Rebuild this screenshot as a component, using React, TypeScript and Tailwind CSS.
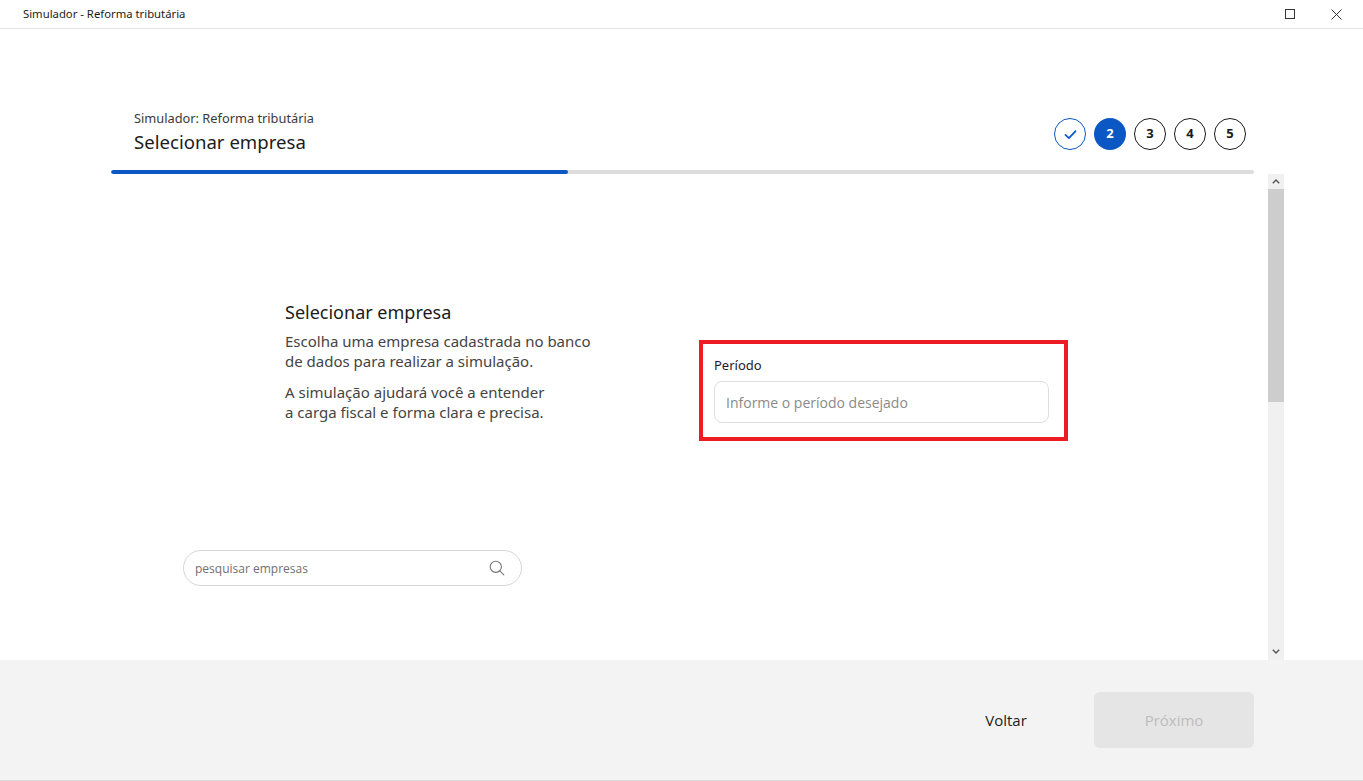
import React, { useState } from 'react';

const font = { fontFamily: '"Noto Sans", "Open Sans", sans-serif' };

const steps = [1, 2, 3, 4, 5];
const current = 2;

const StepDot: React.FC<{ n: number }> = ({ n }) => {
  if (n < current) {
    return (
      <div className="w-[32px] h-[32px] rounded-full border-[1.5px] border-[#0b57c4] bg-white flex items-center justify-center">
        <svg width="15" height="15" viewBox="0 0 14 14" fill="none">
          <path d="M2.3 7.4 L5.5 10.4 L11.7 3.8" stroke="#0b57c4" strokeWidth="1.6" strokeLinecap="round" strokeLinejoin="round" />
        </svg>
      </div>
    );
  }
  if (n === current) {
    return (
      <div className="w-[32px] h-[32px] rounded-full bg-[#0b57c4] flex items-center justify-center text-white text-[13px] font-bold">
        {n}
      </div>
    );
  }
  return (
    <div className="w-[32px] h-[32px] rounded-full border-[1.5px] border-[#1a1a1a] bg-white flex items-center justify-center text-[#1a1a1a] text-[13px] font-bold">
      {n}
    </div>
  );
};

export default function App() {
  const [periodo, setPeriodo] = useState('');
  const [busca, setBusca] = useState('');

  return (
    <div className="w-[1363px] h-[781px] bg-white flex flex-col overflow-hidden" style={font}>
      {/* Title bar */}
      <div className="h-[29px] flex items-center border-b border-[#e3e3e3] shrink-0">
        <span className="ml-[23px] text-[11.3px] text-[#1b1b1b]">Simulador - Reforma tributária</span>
        <div className="ml-auto flex items-center">
          <div className="w-[46px] h-[28px] flex items-center justify-center">
            <div className="w-[10px] h-[10px] border border-[#333]" />
          </div>
          <div className="w-[46px] h-[28px] flex items-center justify-center mr-[4px]">
            <svg width="11" height="11" viewBox="0 0 11 11">
              <path d="M0.5 0.5 L10.5 10.5 M10.5 0.5 L0.5 10.5" stroke="#333" strokeWidth="1" />
            </svg>
          </div>
        </div>
      </div>

      {/* Main */}
      <div className="flex-1 flex flex-col min-h-0">
        {/* Header */}
        <div className="ml-[111px] w-[1143px] pt-[80px] shrink-0">
          <div className="flex justify-between items-start pl-[23px] pr-[8px]">
            <div>
              <div className="text-[12.8px] leading-[18px] text-[#3a3a3a]">Simulador: Reforma tributária</div>
              <div className="text-[18.6px] leading-[30px] text-[#1b1b1b]">Selecionar empresa</div>
            </div>
            <div className="flex gap-[8px] mt-[9px]">
              {steps.map(n => (
                <StepDot key={n} n={n} />
              ))}
            </div>
          </div>
          <div className="mt-[13px] h-[4px] rounded-full bg-[#dcdcdc] overflow-hidden">
            <div className="h-full w-[457px] bg-[#0b57c4] rounded-full" />
          </div>
        </div>

        {/* Scroll area */}
        <div className="flex-1 flex min-h-0">
          <div className="flex-1">
            <div className="flex items-start pt-[126px]">
              <div className="ml-[285px] w-[330px]">
                <h2 className="text-[18px] leading-[24px] text-[#1b1b1b]">Selecionar empresa</h2>
                <p className="mt-[7px] text-[15px] leading-[20px] text-[#444]">
                  Escolha uma empresa cadastrada no banco<br />de dados para realizar a simulação.
                </p>
                <p className="mt-[11px] text-[15px] leading-[20px] text-[#444]">
                  A simulação ajudará você a entender<br />a carga fiscal e forma clara e precisa.
                </p>
              </div>
              <div className="ml-[84px] mt-[40px] w-[369px] h-[101px] border-[4px] border-[#ed1c24] pl-[11px] pr-[15px] pt-[13px]">
                <label className="block text-[13px] leading-[17px] text-[#1b1b1b]">Período</label>
                <input
                  className="mt-[7px] w-[335px] h-[42px] rounded-[8px] border border-[#dedede] px-[11px] text-[14px] text-[#333] placeholder:text-[#8a8a8a] outline-none"
                  style={{ fontFamily: '"Open Sans", sans-serif' }}
                  placeholder="Informe o período desejado"
                  value={periodo}
                  onChange={e => setPeriodo(e.target.value)}
                />
              </div>
            </div>
            <div className="ml-[183px] mt-[109px] w-[339px] h-[36px] rounded-full border border-[#d6d6d6] flex items-center pl-[11px] pr-[16px]">
              <input
                className="flex-1 text-[12px] leading-[16px] pt-[2px] text-[#333] placeholder:text-[#707070] outline-none bg-transparent"
                style={{ fontFamily: '"Open Sans", sans-serif' }}
                placeholder="pesquisar empresas"
                value={busca}
                onChange={e => setBusca(e.target.value)}
              />
              <svg width="16" height="16" viewBox="0 0 16 16" fill="none">
                <circle cx="6.8" cy="6.8" r="5.6" stroke="#777" strokeWidth="1.1" />
                <path d="M10.8 10.8 L14.8 14.8" stroke="#777" strokeWidth="1.1" strokeLinecap="round" />
              </svg>
            </div>
          </div>

          {/* Scrollbar */}
          <div className="w-[16px] mr-[79px] bg-[#f0f0f0] flex flex-col">
            <div className="h-[15px] flex items-center justify-center">
              <svg width="8" height="5" viewBox="0 0 8 5">
                <path d="M0.8 4.2 L4 1 L7.2 4.2" stroke="#555" strokeWidth="1.4" fill="none" />
              </svg>
            </div>
            <div className="h-[213px] bg-[#cdcdcd]" />
            <div className="flex-1" />
            <div className="h-[18px] flex items-center justify-center">
              <svg width="8" height="5" viewBox="0 0 8 5">
                <path d="M0.8 0.8 L4 4 L7.2 0.8" stroke="#555" strokeWidth="1.4" fill="none" />
              </svg>
            </div>
          </div>
        </div>
      </div>

      {/* Footer */}
      <div className="h-[121px] shrink-0 bg-[#f3f3f3] border-b border-[#dcdcdc] flex items-start justify-end pt-[32px] pr-[109px]">
        <button
          className="w-[120px] h-[56px] text-[15px] text-[#1b1b1b]"
          style={{ fontFamily: '"Open Sans", sans-serif' }}
        >
          Voltar
        </button>
        <button
          disabled
          className="ml-[28px] w-[160px] h-[56px] rounded-[6px] bg-[#e5e5e5] text-[15px] text-[#bdbdbd]"
          style={{ fontFamily: '"Open Sans", sans-serif' }}
        >
          Próximo
        </button>
      </div>
    </div>
  );
}
